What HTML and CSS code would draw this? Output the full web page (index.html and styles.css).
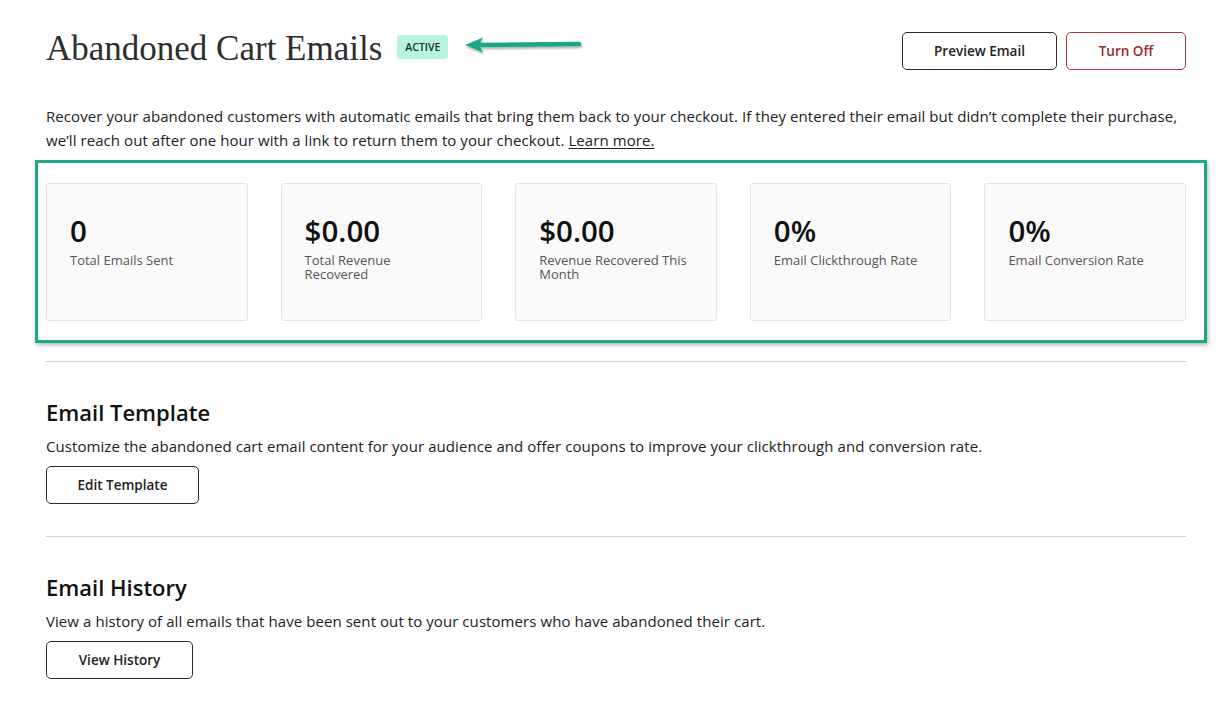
FILE: index.html
```html
<!DOCTYPE html>
<html lang="en">
<head>
<meta charset="utf-8">
<title>Abandoned Cart Emails</title>
<link rel="stylesheet" href="styles.css">
</head>
<body>
<main class="page">
  <header class="page-header">
    <div class="title-group">
      <h1 class="page-title">Abandoned Cart Emails</h1>
      <span class="badge">ACTIVE</span>
      <svg class="annot-arrow" width="124" height="22" viewBox="0 0 124 22" aria-hidden="true">
        <defs>
          <filter id="sh" x="-10%" y="-50%" width="120%" height="200%">
            <feDropShadow dx="1" dy="2" stdDeviation="1.2" flood-color="#000" flood-opacity="0.3"/>
          </filter>
        </defs>
        <g filter="url(#sh)">
          <line x1="14" y1="9" x2="115" y2="8" stroke="#1ba685" stroke-width="4.5" stroke-linecap="round"/>
          <path d="M1 9 L19 1.5 L15 9 L19 16.5 Z" fill="#1ba685"/>
        </g>
      </svg>
    </div>
    <div class="header-actions">
      <button class="btn btn-preview">Preview Email</button>
      <button class="btn btn-danger">Turn Off</button>
    </div>
  </header>

  <p class="intro">Recover your abandoned customers with automatic emails that bring them back to your checkout. If they entered their email but didn’t complete their purchase, we’ll reach out after one hour with a link to return them to your checkout. <a href="#" class="link">Learn more.</a></p>

  <section class="stats">
    <div class="stat-card"><div class="stat-value">0</div><div class="stat-label">Total Emails Sent</div></div>
    <div class="stat-card"><div class="stat-value">$0.00</div><div class="stat-label">Total Revenue<br>Recovered</div></div>
    <div class="stat-card"><div class="stat-value">$0.00</div><div class="stat-label">Revenue Recovered This<br>Month</div></div>
    <div class="stat-card"><div class="stat-value">0%</div><div class="stat-label">Email Clickthrough Rate</div></div>
    <div class="stat-card"><div class="stat-value">0%</div><div class="stat-label">Email Conversion Rate</div></div>
  </section>

  <section class="block">
    <h2 class="block-title">Email Template</h2>
    <p class="block-text">Customize the abandoned cart email content for your audience and offer coupons to improve your clickthrough and conversion rate.</p>
    <button class="btn btn-edit">Edit Template</button>
  </section>

  <section class="block">
    <h2 class="block-title">Email History</h2>
    <p class="block-text">View a history of all emails that have been sent out to your customers who have abandoned their cart.</p>
    <button class="btn btn-history">View History</button>
  </section>
</main>
</body>
</html>
```

FILE: styles.css
```css
* { box-sizing: border-box; }

html, body {
  margin: 0;
  padding: 0;
  background: #ffffff;
}

body {
  font-family: "Open Sans", "Noto Sans", Arial, sans-serif;
  color: #222;
}

.page {
  width: 1140px;
  margin-left: 46px;
  padding-top: 30px;
}

.page-header {
  display: flex;
  justify-content: space-between;
  align-items: flex-start;
}

.title-group {
  display: flex;
  align-items: center;
  height: 38px;
}

.page-title {
  margin: 0;
  font-family: "Liberation Serif", "Times New Roman", serif;
  font-weight: 400;
  font-size: 35px;
  line-height: 38px;
  color: #2e2e2e;
}

.badge {
  margin-left: 15px;
  margin-top: -4px;
  background: #b7f4e0;
  color: #1f2f2a;
  font-size: 10.5px;
  font-weight: 600;
  height: 24px;
  line-height: 24px;
  padding: 0 8px;
  border-radius: 3px;
}

.annot-arrow {
  margin-left: 16px;
  margin-top: -5px;
  display: block;
}

.header-actions {
  display: flex;
  gap: 9px;
  margin-top: 2px;
}

.btn {
  font-family: "Open Sans", "Noto Sans", Arial, sans-serif;
  font-size: 13.5px;
  font-weight: 600;
  height: 38px;
  border-radius: 5px;
  background: #fff;
  border: 1px solid #2b2b2b;
  color: #222;
  padding: 0;
  cursor: pointer;
}

.btn-preview { width: 155px; }
.btn-danger { width: 120px; border-color: #a8393b; color: #9e2a2d; }
.btn-edit { width: 153px; }
.btn-history { width: 147px; }

.intro {
  margin: 34px 0 0;
  font-size: 15px;
  line-height: 24px;
  letter-spacing: 0.07px;
  color: #222;
}

.link {
  color: #222;
  text-decoration: underline;
  text-underline-offset: 2px;
}

.stats {
  position: relative;
  display: grid;
  grid-template-columns: repeat(5, 1fr);
  gap: 33px;
  margin-top: 31px;
}

.stats::after {
  content: "";
  position: absolute;
  left: -11px;
  right: -21px;
  top: -23px;
  bottom: -22px;
  border: 3px solid #1fa88a;
  box-shadow: 1px 2px 4px rgba(0, 0, 0, 0.3);
  pointer-events: none;
}

.stat-card {
  height: 138px;
  background: #fafafa;
  border: 1px solid #e4e4e4;
  border-radius: 3px;
  padding: 27px 23px 0;
}

.stat-value {
  font-size: 29.5px;
  font-weight: 600;
  line-height: 40px;
  color: #111;
}

.stat-label {
  font-size: 13px;
  line-height: 14px;
  color: #555;
  margin-top: 2px;
}

.block {
  border-top: 1px solid #d2d2d2;
  padding-top: 36px;
  padding-bottom: 32px;
}

.stats + .block { margin-top: 40px; }
.block + .block { padding-bottom: 0; }

.block-title {
  margin: 0;
  font-size: 22px;
  font-weight: 600;
  line-height: 28px;
  color: #111;
}

.block-text {
  margin: 8px 0 8px;
  font-size: 15px;
  line-height: 24px;
  letter-spacing: 0.07px;
  color: #222;
}
```
